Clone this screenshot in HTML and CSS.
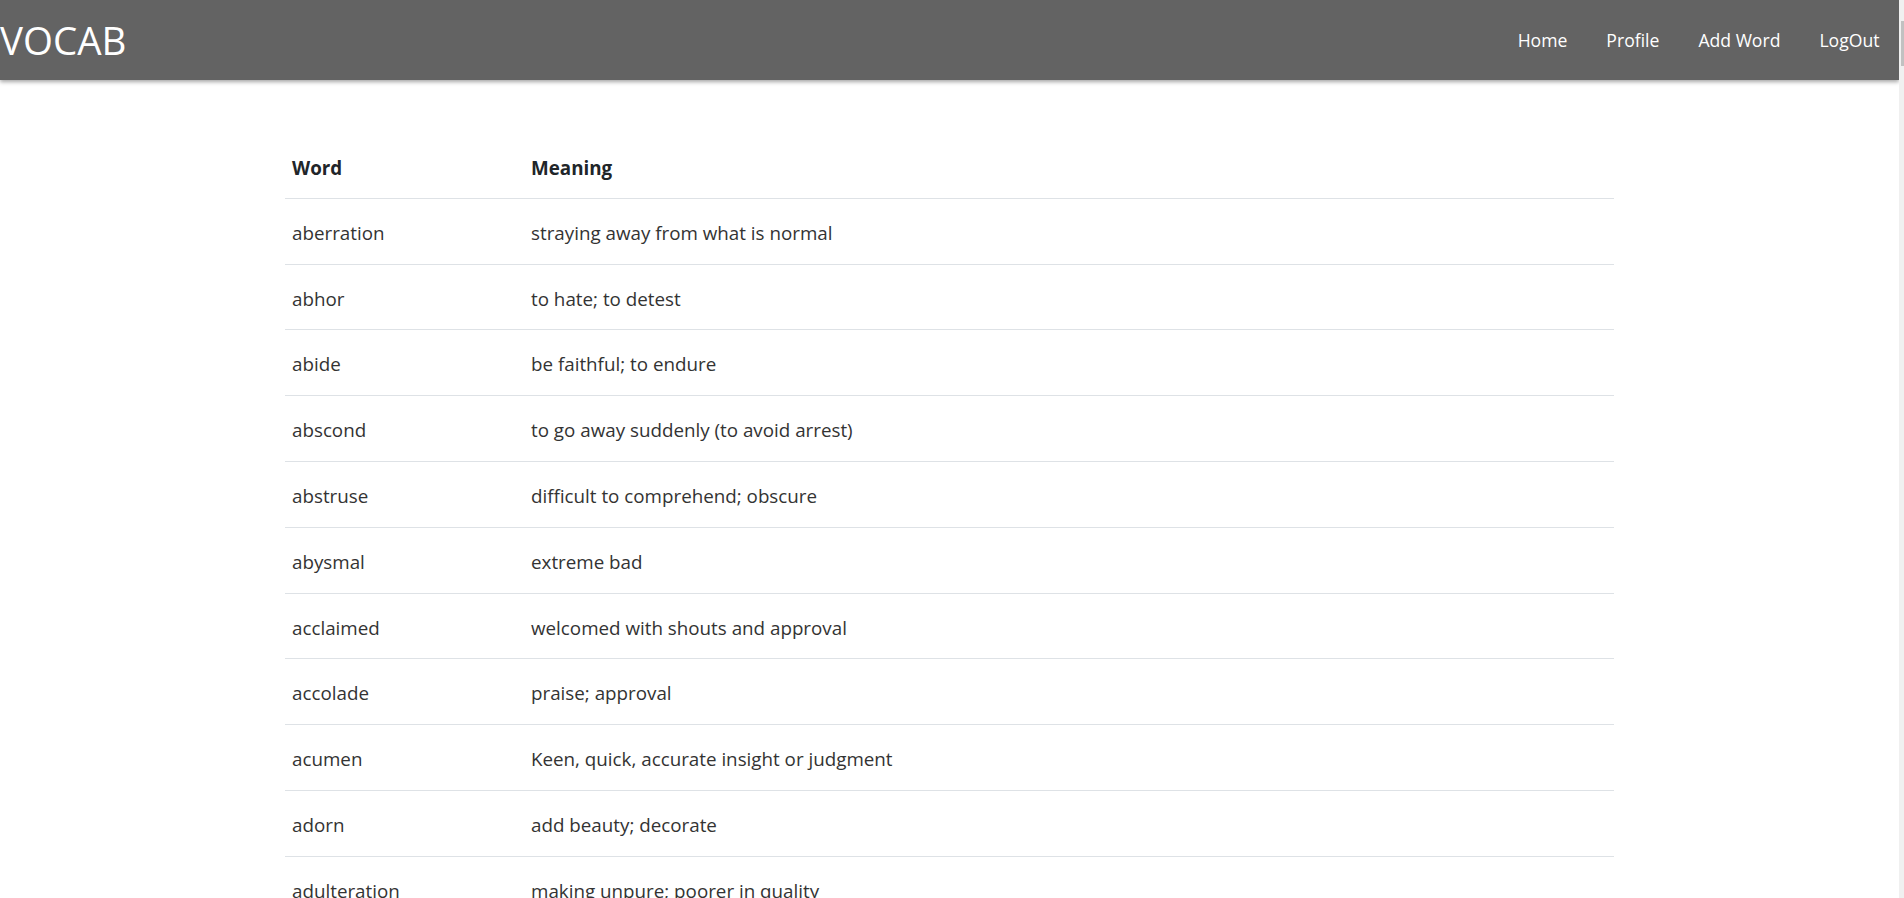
FILE: index.html
```html
<!DOCTYPE html>
<html lang="en">
<head>
<meta charset="utf-8">
<title>VOCAB</title>
<link rel="stylesheet" href="styles.css">
</head>
<body>
<div class="page">
  <header class="topbar">
    <div class="brand">VOCAB</div>
    <nav class="nav">
      <a class="nav-link" href="#">Home</a>
      <a class="nav-link" href="#">Profile</a>
      <a class="nav-link" href="#">Add Word</a>
      <a class="nav-link" href="#">LogOut</a>
    </nav>
  </header>
  <main class="content">
    <table class="words">
      <thead>
        <tr><th class="col-word">Word</th><th>Meaning</th></tr>
      </thead>
      <tbody>
        <tr><td>aberration</td><td>straying away from what is normal</td></tr>
        <tr><td>abhor</td><td>to hate; to detest</td></tr>
        <tr><td>abide</td><td>be faithful; to endure</td></tr>
        <tr><td>abscond</td><td>to go away suddenly (to avoid arrest)</td></tr>
        <tr><td>abstruse</td><td>difficult to comprehend; obscure</td></tr>
        <tr><td>abysmal</td><td>extreme bad</td></tr>
        <tr><td>acclaimed</td><td>welcomed with shouts and approval</td></tr>
        <tr><td>accolade</td><td>praise; approval</td></tr>
        <tr><td>acumen</td><td>Keen, quick, accurate insight or judgment</td></tr>
        <tr><td>adorn</td><td>add beauty; decorate</td></tr>
        <tr><td>adulteration</td><td>making unpure; poorer in quality</td></tr>
        <tr><td>adversary</td><td>opponent; enemy</td></tr>
      </tbody>
    </table>
  </main>
</div>
<div class="scrollbar"><div class="thumb"></div></div>
</body>
</html>
```
FILE: styles.css
```css
html, body {
  margin: 0;
  padding: 0;
  height: 100%;
  overflow: hidden;
}
body {
  display: flex;
  font-family: "Open Sans", "Noto Sans", sans-serif;
  color: #212529;
  background: #fff;
}
.page {
  flex: 1;
  min-width: 0;
  height: 100%;
  overflow: hidden;
}
.topbar {
  height: 80px;
  background: #636363;
  display: flex;
  align-items: center;
  justify-content: space-between;
  box-shadow: 0 2px 4px rgba(0, 0, 0, 0.35);
  position: relative;
  z-index: 1;
}
.brand {
  color: #fff;
  font-size: 38.5px;
  line-height: 1;
  margin-top: 1px;
}
.nav {
  display: flex;
}
.nav-link {
  color: #fff;
  text-decoration: none;
  font-size: 17.6px;
  padding: 0 19.5px;
}
.content {
  padding: 53px 0 0 285px;
}
.words {
  width: 1329px;
  border-collapse: collapse;
  font-size: 18.8px;
}
.words th, .words td {
  text-align: left;
  line-height: 28.8px;
  padding: 20px 7px 16px;
  border-bottom: 1px solid #dee2e6;
  vertical-align: top;
}
.words th {
  font-weight: 700;
  padding-top: 21px;
  padding-bottom: 15px;
}
.words td {
  color: #333;
}
.col-word {
  width: 225px;
}
.scrollbar {
  width: 5px;
  height: 100%;
  background: #f0f0f0;
}
.thumb {
  margin-top: 21px;
  margin-left: 2px;
  width: 3px;
  height: 45px;
  background: #c1c1c1;
}
```
